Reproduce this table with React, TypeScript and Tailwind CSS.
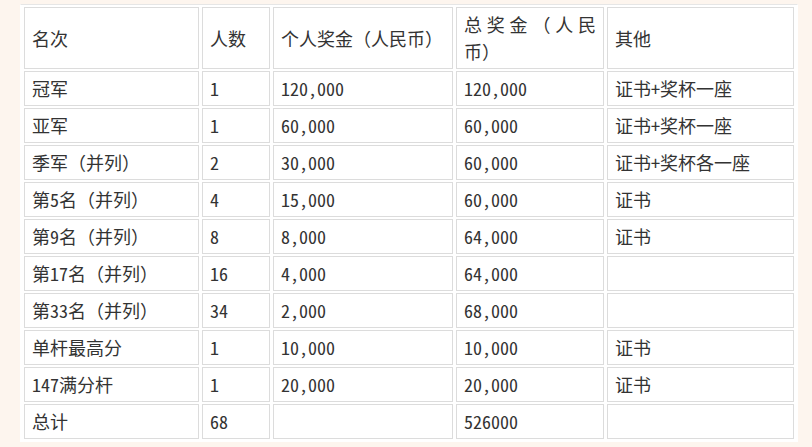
import React from "react";

type Row = {
  rank: string;
  count: string;
  single: string;
  total: string;
  other: string;
};

const rows: Row[] = [
  { rank: "冠军", count: "1", single: "120,000", total: "120,000", other: "证书+奖杯一座" },
  { rank: "亚军", count: "1", single: "60,000", total: "60,000", other: "证书+奖杯一座" },
  { rank: "季军（并列）", count: "2", single: "30,000", total: "60,000", other: "证书+奖杯各一座" },
  { rank: "第5名（并列）", count: "4", single: "15,000", total: "60,000", other: "证书" },
  { rank: "第9名（并列）", count: "8", single: "8,000", total: "64,000", other: "证书" },
  { rank: "第17名（并列）", count: "16", single: "4,000", total: "64,000", other: "" },
  { rank: "第33名（并列）", count: "34", single: "2,000", total: "68,000", other: "" },
  { rank: "单杆最高分", count: "1", single: "10,000", total: "10,000", other: "证书" },
  { rank: "147满分杆", count: "1", single: "20,000", total: "20,000", other: "证书" },
  { rank: "总计", count: "68", single: "", total: "526000", other: "" },
];

const base = "border border-[#dcdcdc] px-[7px] py-[3px] align-middle font-normal";
const cell = `${base} text-left`;

export default function App() {
  return (
    <div className="min-h-screen bg-[#fdf5ee] pt-[4px] pl-[20px] text-[#333] text-[18px] leading-[27px] font-['Noto_Sans_Mono_CJK_SC','Noto_Sans_CJK_SC',sans-serif]">
      {/* Prize table */}
      <table className="table-fixed w-[777px] bg-white border border-white border-t-[#e6e6e6] border-separate border-spacing-x-[3px] border-spacing-y-[2px]">
        <thead>
          <tr>
            <th className={`${cell} w-[175px]`}>名次</th>
            <th className={`${cell} w-[68px]`}>人数</th>
            <th className={`${cell} w-[180px]`}>个人奖金（人民币）</th>
            <th lang="zh-CN" className={`${base} w-[148px] text-justify`}>
              总奖金（人民币）
            </th>
            <th className={`${cell} w-[187px]`}>其他</th>
          </tr>
        </thead>
        <tbody>
          {rows.map((r) => (
            <tr key={r.rank}>
              <td className={cell}>{r.rank}</td>
              <td className={cell}>{r.count}</td>
              <td className={cell}>{r.single}</td>
              <td className={cell}>{r.total}</td>
              <td className={cell}>{r.other}</td>
            </tr>
          ))}
        </tbody>
      </table>
    </div>
  );
}
